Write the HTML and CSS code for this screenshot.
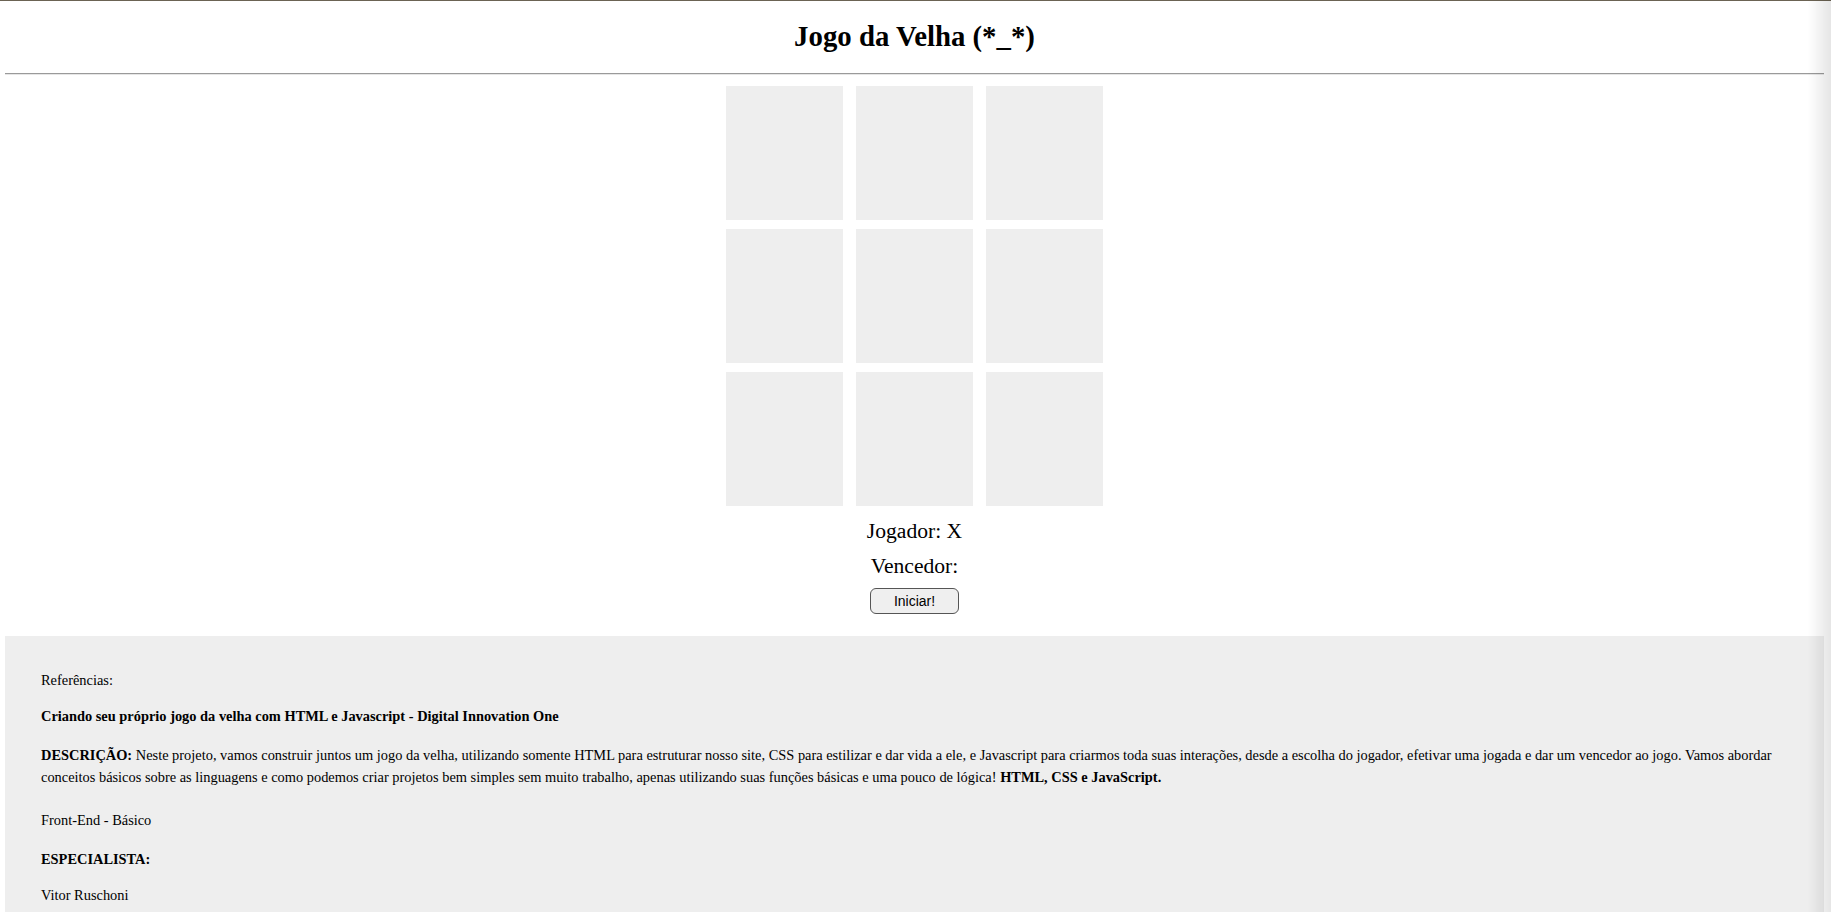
FILE: index.html
```html
<!DOCTYPE html>
<html lang="pt-BR">
<head>
<meta charset="utf-8">
<title>Jogo da Velha</title>
<link rel="stylesheet" href="styles.css">
</head>
<body>
<header class="top">
  <h1 class="title">Jogo da Velha (*_*)</h1>
</header>
<hr class="rule">
<main class="game">
  <div class="board">
    <div class="cell"></div>
    <div class="cell"></div>
    <div class="cell"></div>
    <div class="cell"></div>
    <div class="cell"></div>
    <div class="cell"></div>
    <div class="cell"></div>
    <div class="cell"></div>
    <div class="cell"></div>
  </div>
  <div class="status">Jogador: X</div>
  <div class="status status-winner">Vencedor:</div>
  <button class="start">Iniciar!</button>
</main>
<section class="info">
  <p class="info-line">Referências:</p>
  <p class="info-line info-strong">Criando seu próprio jogo da velha com HTML e Javascript - Digital Innovation One</p>
  <p class="info-line info-desc"><strong>DESCRIÇÃO:</strong> Neste projeto, vamos construir juntos um jogo da velha, utilizando somente HTML para estruturar nosso site, CSS para estilizar e dar vida a ele, e Javascript para criarmos toda suas interações, desde a escolha do jogador, efetivar uma jogada e dar um vencedor ao jogo. Vamos abordar conceitos básicos sobre as linguagens e como podemos criar projetos bem simples sem muito trabalho, apenas utilizando suas funções básicas e uma pouco de lógica! <strong>HTML, CSS e JavaScript.</strong></p>
  <p class="info-line info-level">Front-End - Básico</p>
  <p class="info-line info-strong info-spec">ESPECIALISTA:</p>
  <p class="info-line info-name">Vitor Ruschoni</p>
</section>
<div class="edge-shade"></div>
</body>
</html>
```
FILE: styles.css
```css
html {
  border-top: 1px solid #6b6353;
  background: #fff;
}

body {
  margin: 0 7px 0 5px;
  font-family: "Liberation Serif", "Times New Roman", serif;
  color: #000;
}

.top {
  text-align: center;
}

.title {
  margin: 0;
  padding: 19px 0 0;
  font-size: 28.8px;
  line-height: 32px;
  font-weight: bold;
}

.rule {
  margin: 21px 0 0;
  border: 0;
  border-top: 1px solid #9a9a9a;
  border-bottom: 1px solid #e6e6e6;
  height: 0;
}

.game {
  display: flex;
  flex-direction: column;
  align-items: center;
  padding-top: 11px;
}

.board {
  display: grid;
  grid-template-columns: repeat(3, 117px);
  grid-auto-rows: 134px;
  column-gap: 13px;
  row-gap: 9px;
}

.cell {
  background: #eeeeee;
}

.status {
  font-size: 21.6px;
  line-height: 24px;
  margin-top: 13px;
}

.status-winner {
  margin-top: 11px;
}

.start {
  margin-top: 10px;
  width: 89px;
  height: 26px;
  padding: 0;
  font-family: "Liberation Sans", Arial, sans-serif;
  font-size: 14px;
  color: #000;
  background: #efefef;
  border: 1px solid #555;
  border-radius: 6px;
}

.info {
  margin-top: 22px;
  background: #eeeeee;
  padding: 33px 36px 40px;
}

.info-line {
  margin: 0;
  font-size: 14.4px;
  line-height: 22px;
}

.info-strong {
  font-weight: bold;
}

.info-line + .info-line {
  margin-top: 14px;
}

.info-desc {
  margin-top: 17px !important;
  line-height: 22px;
}

.info-level {
  margin-top: 21px !important;
}

.info-spec {
  margin-top: 17px !important;
}

.info-name {
  margin-top: 14px !important;
}

.edge-shade {
  position: fixed;
  top: 0;
  right: 0;
  bottom: 0;
  width: 23px;
  background: linear-gradient(to right, rgba(0, 0, 0, 0), rgba(0, 0, 0, 0.1));
  pointer-events: none;
}
```
